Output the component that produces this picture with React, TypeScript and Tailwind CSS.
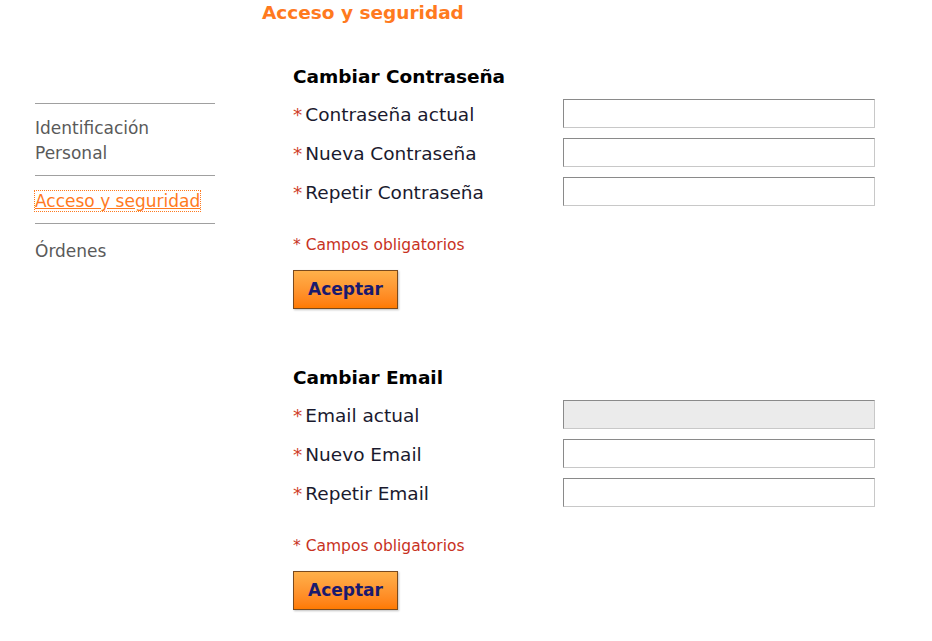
const font = { fontFamily: '"DejaVu Sans", Verdana, sans-serif' };

function Field({ label, disabled }: { label: string; disabled?: boolean }) {
  return (
    <div className="flex items-center h-[39px]">
      <label className="w-[270px] pt-[4px] text-[18.5px] text-[#1a1a2e] flex items-center">
        <span className="text-[#d0402a] mr-[3px]">*</span>
        {label}
      </label>
      <input
        type="text"
        disabled={disabled}
        className={
          "w-[312px] h-[29px] border border-t-[#8a8a8a] border-l-[#8a8a8a] border-r-[#c8c8c8] border-b-[#c8c8c8] outline-none " +
          (disabled ? "bg-[#ebebeb]" : "bg-white")
        }
      />
    </div>
  );
}

function Section({ title, fields, first }: { title: string; fields: { label: string; disabled?: boolean }[]; first?: boolean }) {
  return (
    <div className={first ? "" : "mt-[60px]"}>
      <h2 className="text-[18.5px] font-bold text-black leading-none mb-[7px]">{title}</h2>
      <div className="flex flex-col">
        {fields.map((f) => (
          <Field key={f.label} label={f.label} disabled={f.disabled} />
        ))}
      </div>
      <p className="text-[15.5px] text-[#c8321e] mt-[27px] leading-none">* Campos obligatorios</p>
      <button className="mt-[17px] w-[105px] h-[39px] border border-[#7a4a1e] bg-gradient-to-b from-[#ffb04a] to-[#ff7a00] text-[#1a1a6e] font-bold text-[17px] shadow-[1px_1px_2px_rgba(0,0,0,0.25)]">
        Aceptar
      </button>
    </div>
  );
}

export default function App() {
  return (
    <div className="w-[932px] h-[641px] bg-white relative overflow-hidden" style={font}>
      <h1 className="pl-[262px] pt-[2px] text-[18.5px] font-bold text-[#ff7a1e] leading-[22px]">Acceso y seguridad</h1>
      <div className="flex">
        <nav className="ml-[35px] w-[180px] mt-[79px] text-[17px] text-[#5a5a5a]">
          <div className="border-t border-[#a0a0a0] pt-[12px] pb-[9px] leading-[25px]">
            Identificación
            <br />
            Personal
          </div>
          <div className="border-t border-[#a0a0a0] pt-[13px] pb-[9px] leading-[25px]">
            <a className="text-[#ff7a1e] underline outline-1 outline-dotted outline-[#ff7a1e]">Acceso y seguridad</a>
          </div>
          <div className="border-t border-[#a0a0a0] pt-[15px] leading-[25px]">Órdenes</div>
        </nav>
        <main className="ml-[78px] mt-[44px]">
          <Section
            first
            title="Cambiar Contraseña"
            fields={[{ label: "Contraseña actual" }, { label: "Nueva Contraseña" }, { label: "Repetir Contraseña" }]}
          />
          <Section
            title="Cambiar Email"
            fields={[{ label: "Email actual", disabled: true }, { label: "Nuevo Email" }, { label: "Repetir Email" }]}
          />
        </main>
      </div>
    </div>
  );
}
